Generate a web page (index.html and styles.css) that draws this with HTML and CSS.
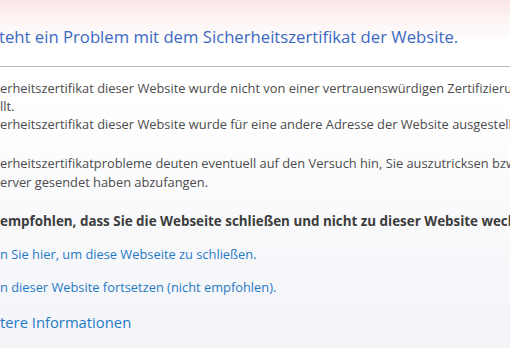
FILE: index.html
```html
<!DOCTYPE html>
<html lang="de">
<head>
<meta charset="utf-8">
<title>Zertifikatfehler</title>
<link rel="stylesheet" href="styles.css">
</head>
<body>
<main class="page">
  <h1 class="title">teht ein Problem mit dem Sicherheitszertifikat der Website.</h1>
  <hr class="rule">
  <ul class="issues">
    <li><span class="line">erheitszertifikat dieser Website wurde nicht von einer vertrauenswürdigen Zertifizierungsstelle ausge-</span><span class="line">llt.</span></li>
    <li><span class="line">erheitszertifikat dieser Website wurde für eine andere Adresse der Website ausgestellt.</span></li>
  </ul>
  <p class="para"><span class="line">erheitszertifikatprobleme deuten eventuell auf den Versuch hin, Sie auszutricksen bzw. Daten, die Sie</span><span class="line">erver gesendet haben abzufangen.</span></p>
  <p class="warn">empfohlen, dass Sie die Webseite schließen und nicht zu dieser Website wechseln.</p>
  <p class="action"><a class="link" href="#">n Sie hier, um diese Webseite zu schließen</a>.</p>
  <p class="action"><a class="link" href="#">n dieser Website fortsetzen (nicht empfohlen)</a>.</p>
  <p class="more"><a class="link" href="#">tere Informationen</a></p>
</main>
</body>
</html>
```
FILE: styles.css
```css
html, body {
  margin: 0;
  padding: 0;
  height: 100%;
}
body {
  overflow: hidden;
  background: linear-gradient(to bottom, #fce6e6 0px, #fdf3f3 18px, #ffffff 44px, #ffffff 90px, #f3f4f8 348px);
  font-family: "Open Sans", "Noto Sans", sans-serif;
  color: #4c4c4c;
  font-size: 12.85px;
}
.page {
  display: flex;
  flex-direction: column;
  padding-top: 25px;
  white-space: nowrap;
}
.title {
  margin: 0 0 0 -1px;
  font-size: 16.7px;
  font-weight: 400;
  line-height: 24px;
  color: #3b69c2;
}
.rule {
  margin: 17px 0 0 0;
  border: 0;
  height: 1px;
  background: #b3b9c6;
  width: 100%;
}
.issues {
  list-style: none;
  margin: 12px 0 0 0;
  padding: 0;
  line-height: 18px;
}
.line {
  display: block;
}
.para {
  margin: 21px 0 0 0;
  line-height: 19px;
}
.warn {
  margin: 20px 0 0 0;
  font-weight: 700;
  font-size: 13.4px;
  color: #3c3c3c;
  line-height: 18px;
}
.action {
  margin: 15px 0 0 0;
  line-height: 18px;
  color: #1f7ac6;
}
.link {
  color: #1f7ac6;
  text-decoration: none;
}
.more {
  margin: 16px 0 0 0;
  font-size: 14.8px;
  line-height: 20px;
}
```
